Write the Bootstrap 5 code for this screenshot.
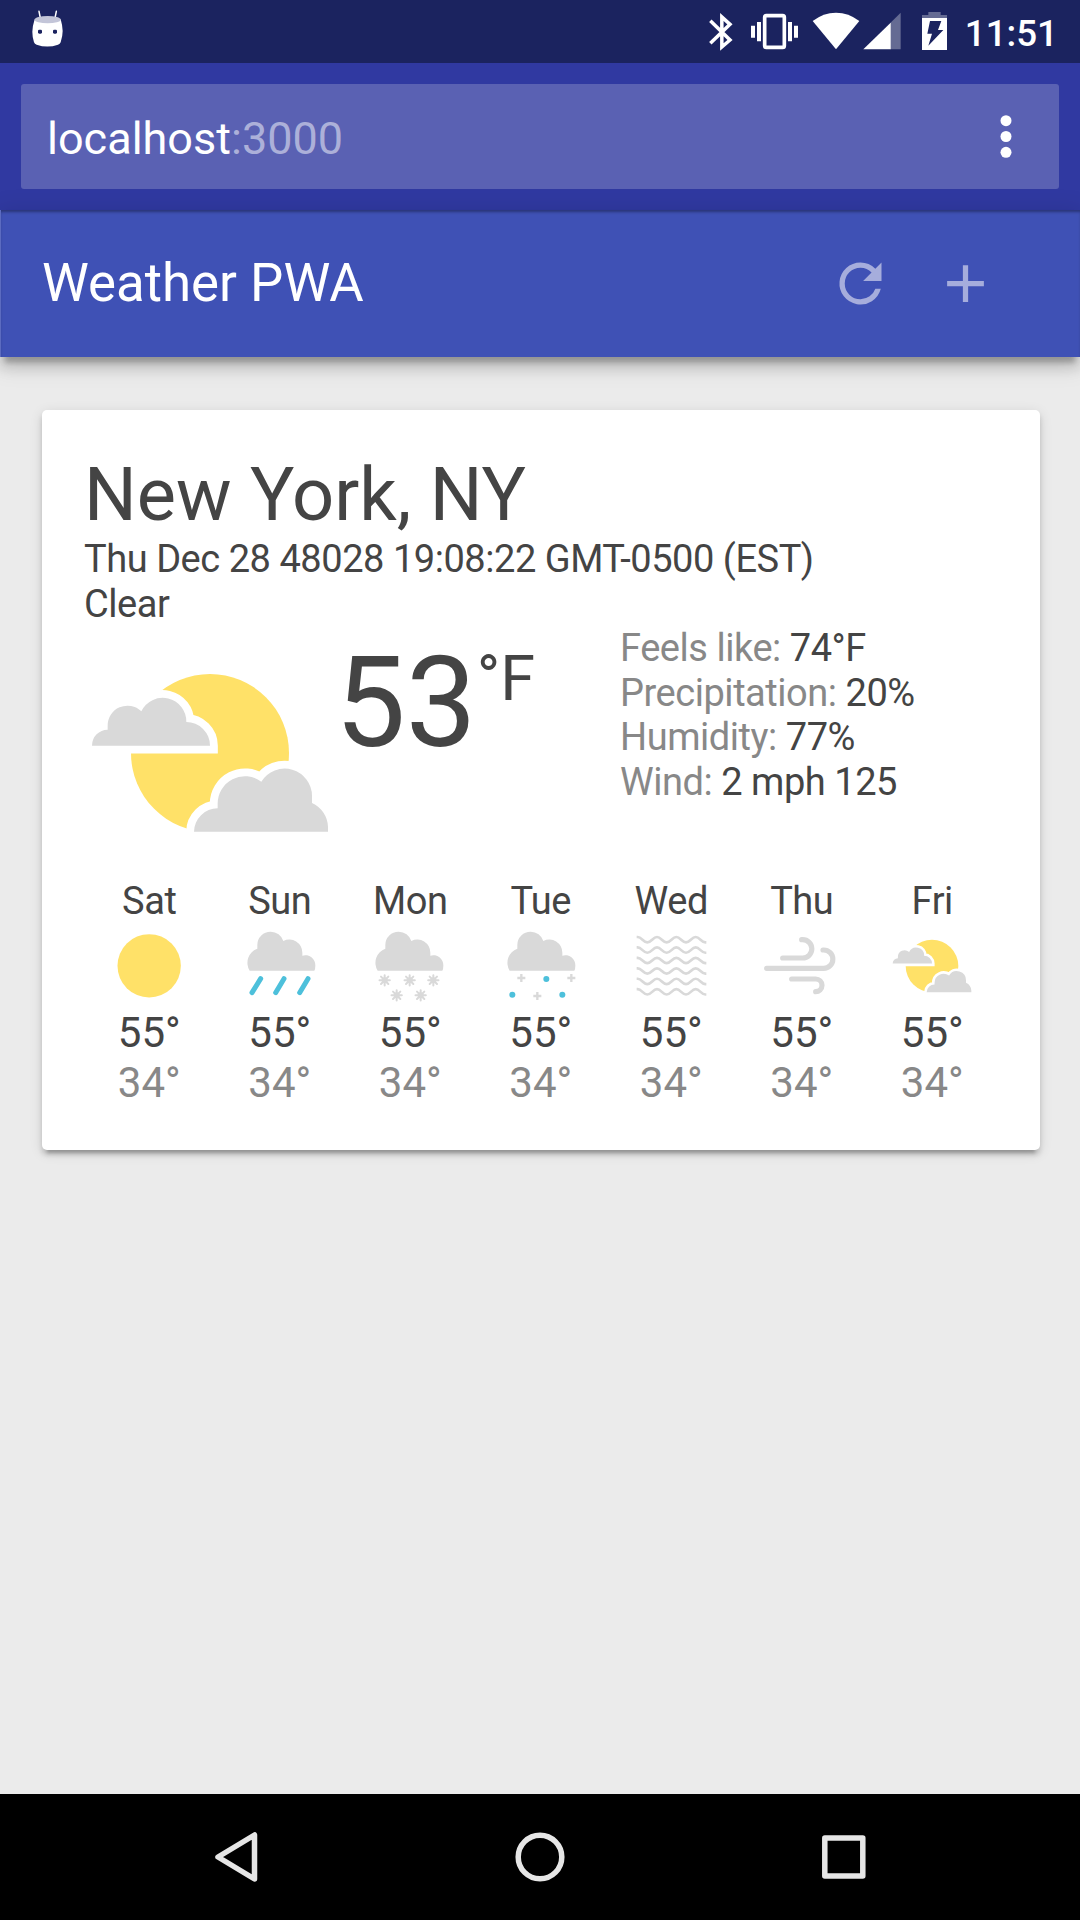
<!DOCTYPE html>
<html lang="en">
<head>
<meta charset="utf-8">
<meta name="viewport" content="width=device-width, initial-scale=1">
<title>Weather PWA</title>
<link href="https://cdn.jsdelivr.net/npm/bootstrap@5.3.0/dist/css/bootstrap.min.css" rel="stylesheet">
<style>
  body { font-family: Roboto, sans-serif; color: #444; background: #ebebeb; height: 1920px; overflow: hidden; line-height: normal; }
  svg { display: block; flex: none; }
  .status-bar { height: 63px; background: #1b235f; padding: 0 22px 0 30px; }
  .clock { font-size: 36.75px; font-weight: 500; line-height: 43px; padding: 3px 0 0 5px; }
  .url-bar { height: 147px; background: #3039a1; padding: 21px; }
  .url-box { height: 105px; background: #5a61b3; border-radius: 3px; padding: 0 46px 0 26px; font-size: 45px; }
  .host { padding-top: 4px; }
  .port { color: #acb0d9; }
  .app-header { height: 147px; background: #3f51b5; padding: 0 83px 0 41px; border-left: 1px solid #5c6bc0;
    box-shadow: 0 10.5px 13px 0 rgba(0,0,0,.14), 0 5px 24px 3px rgba(0,0,0,.12), 0 10.5px 5px -5px rgba(0,0,0,.2), inset 0 3px 3px -1px rgba(0,0,0,.35); }
  .app-title { font-size: 52.8px; font-weight: 400; }
  .tool-icons { gap: 42px; }
  .weather-card { margin: 53px 40.5px 0 42px; height: 739.5px; padding: 42px; background: #fff; border-radius: 5px;
    box-shadow: 0 5px 5px 0 rgba(0,0,0,.14), 0 8px 3px -5px rgba(0,0,0,.2), 0 3px 13px 0 rgba(0,0,0,.12); }
  .city { font-size: 74px; font-weight: 400; line-height: 85px; }
  .line { font-size: 38px; line-height: 44.5px; letter-spacing: -.46px; }
  .now { height: 253px; }
  .now-icon { padding: 46px 0 0 6px; }
  .temp { font-size: 126px; line-height: 148px; padding: 3px 0 0 5px; width: 282px; }
  .unit { font-size: 63px; line-height: 74px; padding-top: 13px; }
  .dim { color: #888; }
  .day { width: 130.5px; }
  .day svg { margin: 0 auto; }
  .degree { font-size: 42px; line-height: 50px; }
  .nav-keys { height: 126px; background: #000; }
</style>
<script src="https://cdn.jsdelivr.net/npm/bootstrap@5.3.0/dist/js/bootstrap.bundle.min.js"></script>
</head>
<body class="d-flex flex-column">
<svg width="0" height="0" class="position-absolute">
  <symbol id="partly" viewBox="90 156 720 486">
    <circle cx="450" cy="399" r="237" fill="#ffe168"/>
    <g fill="#d9d9d9" stroke="#fff" stroke-width="47" paint-order="stroke">
      <path d="M96 377a47 48 0 0 1 47-48V318a59.500 59.500 0 0 1 101-44A71 71 0 0 1 379 306A71 71 0 0 1 450 377Z"/>
      <path d="M402 635A71 71 0 0 1 473 565V552A82 82 0 0 1 604 485A82 82 0 0 1 756 529V549A82 82 0 0 1 804 620V635Z"/>
    </g>
  </symbol>
  <symbol id="cloud" viewBox="413 162 252 252">
    <path fill="#d9d9d9" d="M448 302A45 45 0 0 1 471 236V224A39.500 39.500 0 0 1 511 185A39.500 39.500 0 0 1 549 213A39 39 0 0 1 606 248V257A30 30 0 0 1 645 287Q645 296 642 302Z"/>
  </symbol>
  <symbol id="flake" viewBox="-20 -20 40 40">
    <path stroke="#d9d9d9" stroke-width="6" stroke-linecap="round" d="M0-15.500V15.500M-15.500 0H15.500M-11-11L11 11M-11 11L11-11"/>
    <circle r="9" fill="#d9d9d9"/>
  </symbol>
</svg>

<div class="status-bar d-flex text-white">
  <svg width="34" height="63" viewBox="90 0 102 189">
    <path d="M117 34l4 20M169 34l-4 20" stroke="#fff" stroke-width="4.500" stroke-linecap="round"/>
    <path fill="#fff" d="M104 58Q97 80 97 95Q97 112 102 127Q104 132 110 134Q142 145 174 134Q180 132 182 127Q188 108 188 93Q187 74 182 58Z"/>
    <ellipse cx="143" cy="59" rx="39" ry="11" fill="#c3c5d8"/>
    <rect x="114" y="89" width="12" height="12" rx="4" fill="#1b235f"/><rect x="159" y="89" width="12" height="12" rx="4" fill="#1b235f"/>
  </svg>
  <div class="d-flex ms-auto">
    <svg width="40" height="63" viewBox="84 0 120 189"><path d="M91 62L150 120L125.500 141V51L150 73L91 130" fill="none" stroke="#fff" stroke-width="10.500" stroke-linejoin="miter"/></svg>
    <svg width="62" height="63" viewBox="204 0 186 189"><rect x="254" y="47" width="59" height="95" rx="5" fill="none" stroke="#fff" stroke-width="11"/><path fill="#fff" d="M213 77h12v36h-12zM231 66h12v58h-12zM324 66h12v58h-12zM342 77h12v36h-12z"/></svg>
    <svg width="52" height="63" viewBox="390 0 156 189"><path fill="#fff" d="M398 63Q430 38 468 38T538 63L468 148Z"/></svg>
    <svg width="56" height="63" viewBox="546 0 168 189"><path fill="#656b93" d="M662 38V148H630V70Z"/><path fill="#fff" d="M550 148H632V68Z"/></svg>
    <svg width="42" height="63" viewBox="714 0 126 189"><path fill="#656b93" d="M726 55V45H745V36H782V45H801V55Z"/><path fill="#fff" d="M726 54H801V150H726Z"/><path fill="#1b235f" d="M750 63H784L774 90H790L745 137L756 101H742Z"/></svg>
    <div class="clock d-flex align-items-center">11:51</div>
  </div>
</div>

<div class="url-bar">
  <div class="url-box d-flex align-items-center justify-content-between text-white">
    <div class="host">localhost<span class="port">:3000</span></div>
    <svg width="14" height="105" viewBox="0 0 14 105" fill="#fff"><circle cx="7" cy="36.700" r="5.500"/><circle cx="7" cy="52.500" r="5.500"/><circle cx="7" cy="68.300" r="5.500"/></svg>
  </div>
</div>

<header class="app-header d-flex align-items-center justify-content-between text-white">
  <h1 class="app-title m-0">Weather PWA</h1>
  <div class="tool-icons d-flex">
    <svg width="63" height="63" viewBox="0 0 24 24" fill="#a6addc"><path d="M17.650 6.350A7.958 7.958 0 0 0 12 4a8 8 0 1 0 7.730 10h-2.080A5.990 5.990 0 0 1 12 18a6 6 0 1 1 0-12c1.660 0 3.140.690 4.220 1.780L13 11h7V4z"/></svg>
    <svg width="63" height="63" viewBox="0 0 24 24" fill="#a6addc"><path d="M19 13h-6v6h-2v-6H5v-2h6V5h2v6h6z"/></svg>
  </div>
</header>

<main class="flex-grow-1">
  <section class="weather-card">
    <h2 class="city m-0">New York, NY</h2>
    <div class="line">Thu Dec 28 48028 19:08:22 GMT-0500 (EST)</div>
    <div class="line">Clear</div>
    <div class="now d-flex">
      <div class="now-icon"><svg width="240" height="162"><use href="#partly"/></svg></div>
      <div class="temp d-flex"><span>53</span><span class="unit">°F</span></div>
      <div class="line ps-2">
        <div><span class="dim">Feels like:</span> 74°F</div>
        <div><span class="dim">Precipitation:</span> 20%</div>
        <div><span class="dim">Humidity:</span> 77%</div>
        <div><span class="dim">Wind:</span> 2 mph 125</div>
      </div>
    </div>
    <div class="d-flex text-center">
      <div class="day"><div class="line">Sat</div>
        <svg width="84" height="84" viewBox="22 162 252 252"><circle cx="148.500" cy="287.500" r="95" fill="#ffe168"/></svg>
        <div class="degree">55°</div><div class="degree dim">34°</div></div>
      <div class="day"><div class="line">Sun</div>
        <svg width="84" height="84" viewBox="413 162 252 252"><use href="#cloud" x="413" y="162" width="252" height="252"/><path stroke="#4dc0db" stroke-width="15" stroke-linecap="round" d="M481 326L455 368M551 326L526 368M623 326L598 368"/></svg>
        <div class="degree">55°</div><div class="degree dim">34°</div></div>
      <div class="day"><div class="line">Mon</div>
        <svg width="84" height="84" viewBox="805 162 252 252"><use href="#cloud" x="799" y="162" width="252" height="252"/>
          <use href="#flake" x="835" y="311" width="40" height="40"/><use href="#flake" x="910" y="311" width="40" height="40"/><use href="#flake" x="981" y="311" width="40" height="40"/><use href="#flake" x="871" y="356" width="40" height="40"/><use href="#flake" x="943" y="356" width="40" height="40"/></svg>
        <div class="degree">55°</div><div class="degree dim">34°</div></div>
      <div class="day"><div class="line">Tue</div>
        <svg width="84" height="84" viewBox="116 162 252 252"><use href="#cloud" x="113" y="162" width="252" height="252"/>
          <path stroke="#d9d9d9" stroke-width="7" d="M171 324h24M183 312v24M321 324h24M333 312v24M219 378h24M231 366v24"/><g fill="#4dc0db"><circle cx="258" cy="327" r="9"/><circle cx="156" cy="374" r="9"/><circle cx="306" cy="374" r="9"/></g></svg>
        <div class="degree">55°</div><div class="degree dim">34°</div></div>
      <div class="day"><div class="line">Wed</div>
        <svg width="84" height="84" viewBox="508 162 252 252"><defs><path id="wave" fill="none" stroke="#d9d9d9" stroke-width="8" d="M531 201H534C546 201 551 217 563 217S580 201 592 201S609 217 621 217S638 201 650 201S667 217 679 217S696 201 708 201S725 217 737 217H740"/></defs>
          <use href="#wave"/><use href="#wave" y="31.300"/><use href="#wave" y="62.600"/><use href="#wave" y="94"/><use href="#wave" y="125.300"/><use href="#wave" y="156.600"/></svg>
        <div class="degree">55°</div><div class="degree dim">34°</div></div>
      <div class="day"><div class="line">Thu</div>
        <svg width="84" height="84" viewBox="59 162 252 252"><path fill="none" stroke="#d9d9d9" stroke-width="15.500" stroke-linecap="round" d="M127 264H187A27.500 27.500 0 0 0 187 209H184M79 295H250A27.500 27.500 0 0 0 250 240H248M154 327H226A19 19 0 0 1 226 365"/></svg>
        <div class="degree">55°</div><div class="degree dim">34°</div></div>
      <div class="day"><div class="line">Fri</div>
        <svg width="84" height="84" viewBox="0 0 84 84"><use href="#partly" x="2" y="15" width="80" height="54"/></svg>
        <div class="degree">55°</div><div class="degree dim">34°</div></div>
    </div>
  </section>
</main>

<nav class="nav-keys d-flex justify-content-center">
  <svg width="720" height="126" viewBox="180 1794 720 126" fill="none" stroke="#e6e6e6" stroke-width="5.500" stroke-linejoin="round">
    <path d="M218 1857L254.500 1835V1879Z"/><circle cx="540" cy="1857" r="21.800"/><rect x="824.800" y="1838" width="38" height="38"/>
  </svg>
</nav>
</body>
</html>
